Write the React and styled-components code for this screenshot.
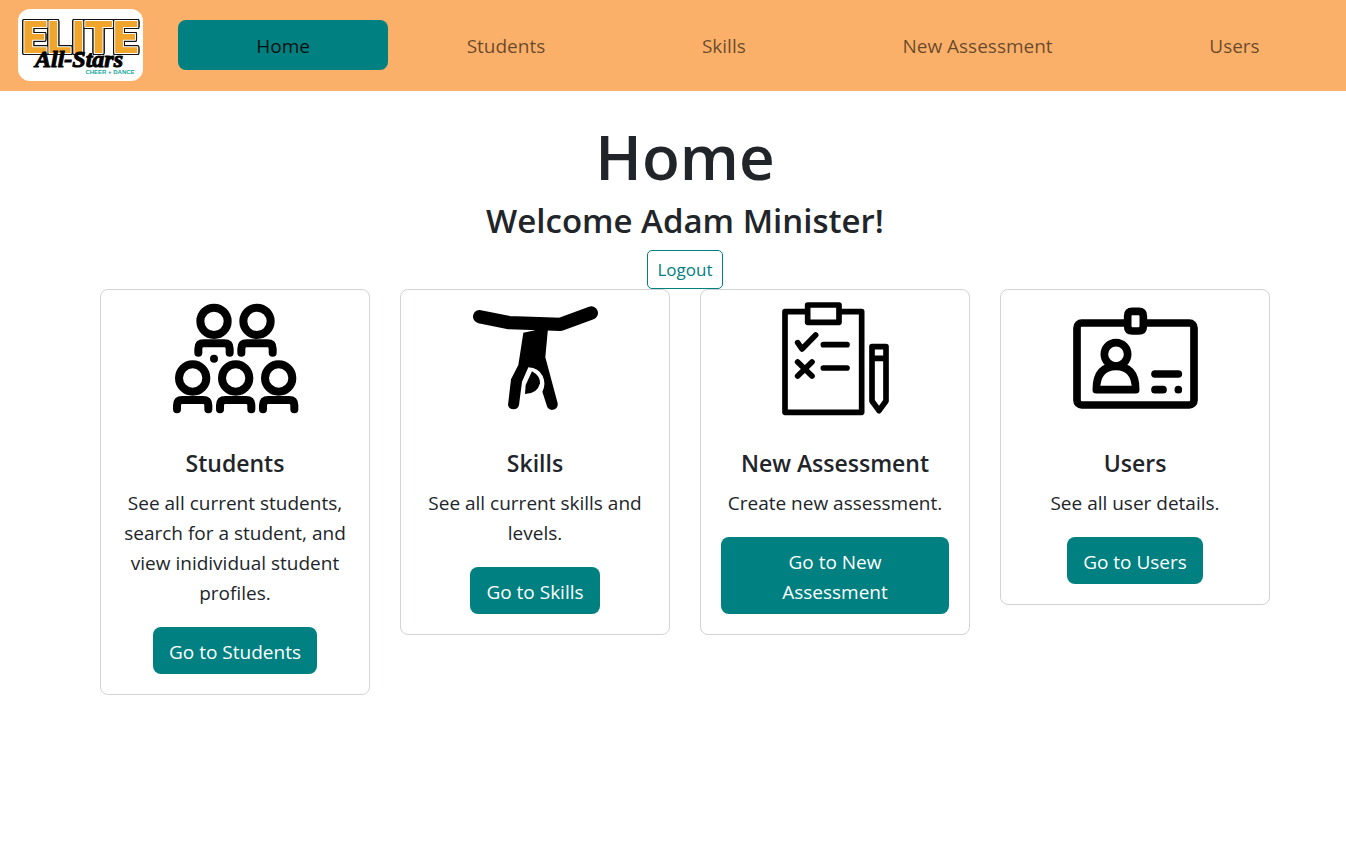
import React from "react";
import styled, { createGlobalStyle } from "styled-components";

const GlobalStyle = createGlobalStyle`
  *, *::before, *::after { box-sizing: border-box; }
  body {
    margin: 0;
    background: #fff;
    color: #212529;
    font-family: "Segoe UI", "Open Sans", "Noto Sans", sans-serif;
    font-size: 19px;
    line-height: 30px;
  }
`;

const Navbar = styled.header`
  display: flex;
  align-items: center;
  gap: 35px;
  min-height: 91px;
  padding: 9px 8px 10px 18px;
  background: #fbb06a;
`;

const Brand = styled.a`
  display: block;
  flex: none;
  width: 125px;
  height: 72px;
  border-radius: 12px;
  background: #fff;
`;

const LogoWord = styled.text`
  font: 900 45px Roboto, sans-serif;
  fill: #f0a52c;
  stroke: #fff;
  stroke-width: 2px;
  stroke-linejoin: round;
  paint-order: stroke;
  filter: drop-shadow(1px 0 #111) drop-shadow(-1px 0 #111) drop-shadow(0 1px #111) drop-shadow(0 -1px #111);
`;

const LogoScript = styled.text`
  font: italic 700 24px "Liberation Serif", serif;
  fill: #000;
  stroke: #000;
  stroke-width: 1px;
`;

const LogoTagline = styled.text`
  font: 700 6px "Liberation Sans", sans-serif;
  fill: #18a79b;
`;

const Nav = styled.nav`
  display: flex;
  flex: 1;
`;

const NavLink = styled.a`
  flex: 1 1 auto;
  padding: 11px 0 9px;
  border-radius: 8px;
  text-align: center;
  text-decoration: none;
  color: ${(p) => (p.$active ? "rgba(0, 0, 0, 0.9)" : "rgba(0, 0, 0, 0.6)")};
  background: ${(p) => (p.$active ? "#008080" : "transparent")};
`;

const Main = styled.main`
  display: flex;
  flex-direction: column;
  align-items: center;
  padding: 27px 0 24px 24px;
`;

const Title = styled.h1`
  margin: 0 0 6px;
  font-size: 62px;
  line-height: 76px;
  font-weight: 600;
`;

const Welcome = styled.h2`
  margin: 0 0 9px;
  font-size: 33px;
  line-height: 41px;
  font-weight: 600;
`;

const LogoutButton = styled.button`
  padding: 5px 9px;
  border: 1px solid #008080;
  border-radius: 5px;
  background: transparent;
  color: #008080;
  font-family: inherit;
  font-size: 17px;
  line-height: 27px;
`;

const Cards = styled.section`
  display: flex;
  flex-wrap: wrap;
  justify-content: center;
  align-items: flex-start;
  gap: 30px;
`;

const Card = styled.article`
  display: flex;
  flex-direction: column;
  align-items: center;
  width: 270px;
  padding: 6px 20px 20px;
  border: 1px solid #d2d3d4;
  border-radius: 8px;
  text-align: center;
`;

const IconArt = styled.svg`
  display: block;
  width: 125px;
  height: 125px;
  margin-bottom: 27px;
  overflow: visible;
`;

const CardTitle = styled.h3`
  margin: 0 0 10px;
  font-size: 23px;
  line-height: 30px;
  font-weight: 600;
`;

const CardText = styled.p`
  margin: 0 0 19px;
`;

const CardLink = styled.a`
  padding: 10px 16px 7px;
  border-radius: 8px;
  background: #008080;
  color: #fff;
  text-decoration: none;
`;

function Logo() {
  return (
    <svg width="125" height="72" viewBox="0 0 125 72" role="img" aria-label="Elite All-Stars Cheer + Dance">
      <LogoWord x="62" y="44" textAnchor="middle">ELITE</LogoWord>
      <LogoScript x="61" y="58" textAnchor="middle">All-Stars</LogoScript>
      <LogoTagline x="92" y="65" textAnchor="middle">CHEER + DANCE</LogoTagline>
    </svg>
  );
}

function Icon({ children }) {
  return (
    <IconArt viewBox="39 18 375 375" fill="none" stroke="#000" strokeLinecap="round" aria-hidden="true">
      {children}
    </IconArt>
  );
}

function Person({ x, y }) {
  return (
    <g strokeWidth="24">
      <circle cx={x} cy={y} r="41" />
      <path d={`M${x - 47} ${y + 94}V${y + 82}Q${x - 47} ${y + 66} ${x - 31} ${y + 66}H${x + 31}Q${x + 47} ${y + 66} ${x + 47} ${y + 82}V${y + 94}`} />
    </g>
  );
}

const StudentsIcon = () => (
  <Icon>
    <Person x={162} y={94} />
    <Person x={291} y={94} />
    <Person x={98} y={264} />
    <Person x={227} y={264} />
    <Person x={356} y={264} />
    <circle cx="162" cy="206" r="12" fill="#000" stroke="none" />
  </Icon>
);

const SkillsIcon = () => (
  <Icon>
    <path d="M59 80L148 98L302 103L394 69" strokeWidth="40" strokeLinejoin="round" />
    <path
      d="M190 128L225 121V115H264L256 202L293 340A17 17 0 0 1 262 352L247 305Q259 282 248 258Q236 234 205 232L186 275L177 345A17 17 0 0 1 144 345L153 268L175 225Z"
      fill="#000"
      stroke="none"
    />
    <path d="M216 244Q241 258 240 280Q232 312 195 312L197 285Z" fill="#000" stroke="none" />
  </Icon>
);

const AssessmentIcon = () => (
  <Icon>
    <g strokeWidth="17" strokeLinejoin="round">
      <rect x="75" y="65" width="230" height="302" />
      <rect x="143" y="45" width="94" height="52" fill="#fff" />
      <path d="M113 158L126 177L167 135" />
      <path d="M190 164H261M190 234H261" />
      <path d="M113 216L156 258M156 216L113 258" />
      <path d="M336 170H378V333L357 362L336 333ZM336 205H378" />
    </g>
  </Icon>
);

const UsersIcon = () => (
  <Icon>
    <g strokeWidth="23" strokeLinejoin="round">
      <rect x="51" y="99" width="351" height="246" rx="14" />
      <path d="M217 64H236Q250 64 250 78V109Q250 123 236 123H217Q203 123 203 109V78Q203 64 217 64Z" fill="#fff" />
      <circle cx="168" cy="193" r="35" />
      <path d="M109 299Q109 229 168 229Q227 229 227 299Z" />
      <path d="M285 252H355M285 299H309M355 299H355" />
    </g>
  </Icon>
);

const navItems = ["Home", "Students", "Skills", "New Assessment", "Users"];

const cards = [
  {
    title: "Students",
    text: "See all current students, search for a student, and view inidividual student profiles.",
    Art: StudentsIcon,
  },
  { title: "Skills", text: "See all current skills and levels.", Art: SkillsIcon },
  { title: "New Assessment", text: "Create new assessment.", Art: AssessmentIcon },
  { title: "Users", text: "See all user details.", Art: UsersIcon },
];

export default function App() {
  return (
    <>
      <GlobalStyle />
      <Navbar>
        <Brand href="#home">
          <Logo />
        </Brand>
        <Nav>
          {navItems.map((item) => (
            <NavLink key={item} href="#" $active={item === "Home"} aria-current={item === "Home" ? "page" : undefined}>
              {item}
            </NavLink>
          ))}
        </Nav>
      </Navbar>
      <Main>
        <Title>Home</Title>
        <Welcome>Welcome Adam Minister!</Welcome>
        <LogoutButton type="button">Logout</LogoutButton>
        <Cards>
          {cards.map(({ title, text, Art }) => (
            <Card key={title}>
              <Art />
              <CardTitle>{title}</CardTitle>
              <CardText>{text}</CardText>
              <CardLink href="#">{`Go to ${title}`}</CardLink>
            </Card>
          ))}
        </Cards>
      </Main>
    </>
  );
}
